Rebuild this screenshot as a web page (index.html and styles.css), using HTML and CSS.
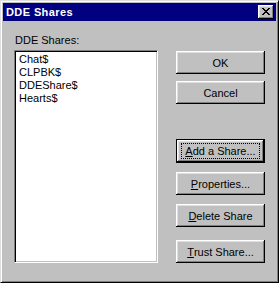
FILE: index.html
```html
<!DOCTYPE html>
<html lang="en">
<head>
  <meta charset="UTF-8">
  <title>DDE Shares</title>
  <link rel="stylesheet" href="styles.css">
</head>
<body>
  <!-- Dialog window -->
  <div class="window">
    <div class="titlebar">
      <span class="title">DDE Shares</span>
      <button class="close-btn" aria-label="Close">
        <svg width="8" height="7" viewBox="0 0 8 7">
          <path d="M0 0h2v1h-2zM6 0h2v1h-2zM1 1h2v1h-2zM5 1h2v1h-2zM2 2h4v1h-4zM3 3h2v1h-2zM2 4h4v1h-4zM1 5h2v1h-2zM5 5h2v1h-2zM0 6h2v1h-2zM6 6h2v1h-2z" fill="#000"/>
        </svg>
      </button>
    </div>

    <div class="dialog-body">
      <!-- Share list -->
      <div class="list-column">
        <label class="list-label">DDE Shares:</label>
        <ul class="share-list">
          <li>Chat$</li>
          <li>CLPBK$</li>
          <li>DDEShare$</li>
          <li>Hearts$</li>
        </ul>
      </div>

      <!-- Buttons -->
      <div class="button-column">
        <button class="btn btn-ok">OK</button>
        <button class="btn btn-cancel">Cancel</button>
        <button class="btn btn-default btn-add"><span class="focus"><u>A</u>dd a Share...</span></button>
        <button class="btn btn-props"><u>P</u>roperties...</button>
        <button class="btn btn-delete"><u>D</u>elete Share</button>
        <button class="btn btn-trust"><u>T</u>rust Share...</button>
      </div>
    </div>
  </div>
</body>
</html>
```

FILE: styles.css
```css
/* General */
body {
  margin: 0;
  padding: 0;
  background: #c0c0c0;
  font-family: 'Liberation Sans', Arial, sans-serif;
  font-size: 11px;
  color: #000;
}

/* Window frame */
.window {
  width: 279px;
  height: 283px;
  box-sizing: border-box;
  background: #c0c0c0;
  border: 1px solid;
  border-color: #dfdfdf #000 #000 #dfdfdf;
  box-shadow: inset 1px 1px 0 #fff, inset -1px -1px 0 #808080;
  padding: 2px;
  display: flex;
  flex-direction: column;
}

/* Title bar */
.titlebar {
  height: 18px;
  background: #000080;
  color: #fff;
  display: flex;
  align-items: center;
  justify-content: space-between;
  padding: 0 2px 0 3px;
}

.title {
  font-weight: bold;
  font-size: 11px;
  letter-spacing: 0.4px;
}

.close-btn {
  width: 16px;
  height: 14px;
  padding: 0;
  margin: 0;
  background: #c0c0c0;
  border: none;
  box-shadow: inset -1px -1px 0 #000, inset 1px 1px 0 #fff, inset -2px -2px 0 #808080, inset 2px 2px 0 #dfdfdf;
  display: flex;
  align-items: center;
  justify-content: center;
}

.close-btn svg {
  display: block;
  margin: 0 1px 1px 0;
}

/* Body */
.dialog-body {
  flex: 1;
  display: flex;
  padding: 0 11px 0 11px;
}

.list-column {
  display: flex;
  flex-direction: column;
  width: 144px;
}

.list-label {
  display: block;
  margin: 13px 0 0 1px;
  line-height: 13px;
  height: 16px;
}

.share-list {
  list-style: none;
  margin: 0;
  height: 213px;
  box-sizing: border-box;
  background: #fff;
  border: 1px solid;
  border-color: #808080 #fff #fff #808080;
  box-shadow: inset 1px 1px 0 #000, inset -1px -1px 0 #c0c0c0;
  padding: 2px 2px 0 4px;
}

.share-list li {
  line-height: 13px;
}

/* Buttons */
.button-column {
  margin-left: auto;
  display: flex;
  flex-direction: column;
  width: 89px;
  padding-top: 30px;
}

.btn {
  width: 89px;
  height: 23px;
  padding: 0;
  background: #c0c0c0;
  font-family: inherit;
  font-size: 11px;
  color: #000;
  border: none;
  box-shadow: inset -1px -1px 0 #000, inset 1px 1px 0 #fff, inset -2px -2px 0 #808080, inset 2px 2px 0 #dfdfdf;
  display: flex;
  align-items: center;
  justify-content: center;
}

.btn-cancel {
  margin-top: 7px;
}

.btn-add {
  margin-top: 35px;
  height: 24px;
  box-shadow: inset 0 0 0 1px #000, inset -2px -2px 0 #000, inset 2px 2px 0 #fff, inset -3px -3px 0 #808080, inset 3px 3px 0 #dfdfdf;
}

.btn-add .focus {
  display: flex;
  align-items: center;
  justify-content: center;
  width: 79px;
  height: 16px;
  box-sizing: border-box;
  border: 1px dotted #000;
}

.btn-props {
  margin-top: 9px;
}

.btn-delete {
  margin-top: 9px;
}

.btn-trust {
  margin-top: 13px;
}
```
